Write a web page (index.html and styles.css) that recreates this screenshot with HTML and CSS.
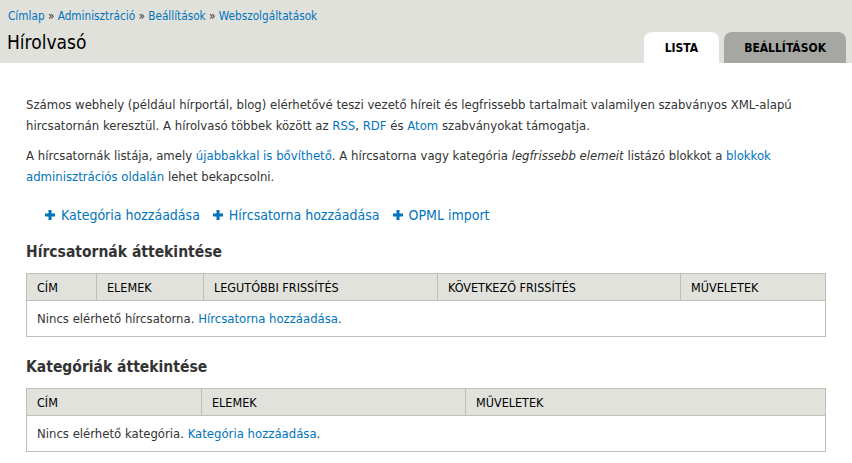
FILE: index.html
```html
<!DOCTYPE html>
<html lang="hu">
<head>
    <meta charset="utf-8">
    <title>Hírolvasó</title>
    <link rel="stylesheet" href="styles.css">
</head>

<body>
    <div class="header">
        <div class="header_left">
            <div class="breadcrumb">
                <a href="#">Címlap</a> » <a href="#">Adminisztráció</a> » <a href="#">Beállítások</a> » <a href="#">Webszolgáltatások</a>
            </div>
            <h1 class="page_title">Hírolvasó</h1>
        </div>
        <ul class="tabs">
            <li class="tab active"><a href="#">Lista</a></li>
            <li class="tab"><a href="#">Beállítások</a></li>
        </ul>
    </div>

    <div class="content">
        <p>Számos webhely (például hírportál, blog) elérhetővé teszi vezető híreit és legfrissebb tartalmait valamilyen szabványos XML-alapú hircsatornán keresztül. A hírolvasó többek között az <a href="#">RSS</a>, <a href="#">RDF</a> és <a href="#">Atom</a> szabványokat támogatja.</p>
        <p>A hírcsatornák listája, amely <a href="#">újabbakkal is bővíthető</a>. A hírcsatorna vagy kategória <em>legfrissebb elemeit</em> listázó blokkot a <a href="#">blokkok adminisztrációs oldalán</a> lehet bekapcsolni.</p>

        <ul class="action_links">
            <li><svg class="plus" width="10" height="10" viewBox="0 0 10 10"><path d="M3.5 0h3v3.5H10v3H6.5V10h-3V6.5H0v-3h3.5z"/></svg><a href="#">Kategória hozzáadása</a></li>
            <li><svg class="plus" width="10" height="10" viewBox="0 0 10 10"><path d="M3.5 0h3v3.5H10v3H6.5V10h-3V6.5H0v-3h3.5z"/></svg><a href="#">Hírcsatorna hozzáadása</a></li>
            <li><svg class="plus" width="10" height="10" viewBox="0 0 10 10"><path d="M3.5 0h3v3.5H10v3H6.5V10h-3V6.5H0v-3h3.5z"/></svg><a href="#">OPML import</a></li>
        </ul>

        <h2>Hírcsatornák áttekintése</h2>
        <table class="overview">
            <colgroup>
                <col class="c70"><col class="c107"><col class="c234"><col class="c243"><col>
            </colgroup>
            <thead>
                <tr><th>Cím</th><th>Elemek</th><th>Legutóbbi frissítés</th><th>Következő frissítés</th><th>Műveletek</th></tr>
            </thead>
            <tbody>
                <tr><td colspan="5">Nincs elérhető hírcsatorna. <a href="#">Hírcsatorna hozzáadása</a>.</td></tr>
            </tbody>
        </table>

        <h2>Kategóriák áttekintése</h2>
        <table class="overview">
            <colgroup>
                <col class="c175"><col class="c264"><col>
            </colgroup>
            <thead>
                <tr><th>Cím</th><th>Elemek</th><th>Műveletek</th></tr>
            </thead>
            <tbody>
                <tr><td colspan="3">Nincs elérhető kategória. <a href="#">Kategória hozzáadása</a>.</td></tr>
            </tbody>
        </table>
    </div>
</body>

</html>
```

FILE: styles.css
```css
body {
    font-family: "DejaVu Sans Condensed", "DejaVu Sans", sans-serif;
    font-size: 13px;
    color: #333;
    background-color: #fff;
    margin: 0;
}

a {
    color: #0074bd;
    text-decoration: none;
}

.header {
    background-color: #e1e1db;
    display: flex;
    justify-content: space-between;
    align-items: flex-end;
    height: 63px;
    box-sizing: border-box;
    padding: 0 6px 0 8px;
}

.header_left {
    align-self: stretch;
    padding-top: 8px;
}

.breadcrumb {
    font-size: 11.7px;
    line-height: 16px;
    color: #333;
}

.page_title {
    font-weight: normal;
    font-size: 19px;
    line-height: 24px;
    color: #000;
    margin: 6px 0 0 -1px;
}

.tabs {
    list-style: none;
    margin: 0;
    padding: 0;
    display: flex;
    gap: 5px;
}

.tab a {
    display: block;
    height: 31px;
    line-height: 32px;
    padding: 0 20px;
    border-radius: 8px 8px 0 0;
    background-color: #a6a7a2;
    color: #000;
    font-weight: bold;
    font-size: 12px;
    text-transform: uppercase;
}

.tab.active a {
    background-color: #fff;
    padding: 0 21px;
}

.content {
    padding: 22px 26px 0;
}

p {
    line-height: 21px;
    margin: 9px 0;
}

.action_links {
    list-style: none;
    margin: 18px 0 0;
    padding: 0 0 0 19px;
    display: flex;
    gap: 13px;
    line-height: 20px;
    font-size: 14px;
}

.action_links li {
    display: flex;
    align-items: center;
    gap: 6px;
}

.plus {
    fill: #0074bd;
}

h2 {
    font-size: 15.5px;
    line-height: 20px;
    color: #333;
    margin: 17px 0 11px;
}

.overview {
    width: 100%;
    border-collapse: collapse;
    border: 1px solid #bebfb9;
}

.overview th {
    background-color: #e1e2dc;
    border: 1px solid #bebfb9;
    font-weight: normal;
    text-align: left;
    text-transform: uppercase;
    font-size: 12.5px;
    color: #000;
    height: 26px;
    padding: 0 10px;
}

.overview td {
    height: 35px;
    padding: 0 10px;
}

.c70 { width: 70px; }
.c107 { width: 107px; }
.c234 { width: 234px; }
.c243 { width: 243px; }
.c175 { width: 175px; }
.c264 { width: 264px; }

.overview + h2 {
    margin-top: 20px;
}
```
